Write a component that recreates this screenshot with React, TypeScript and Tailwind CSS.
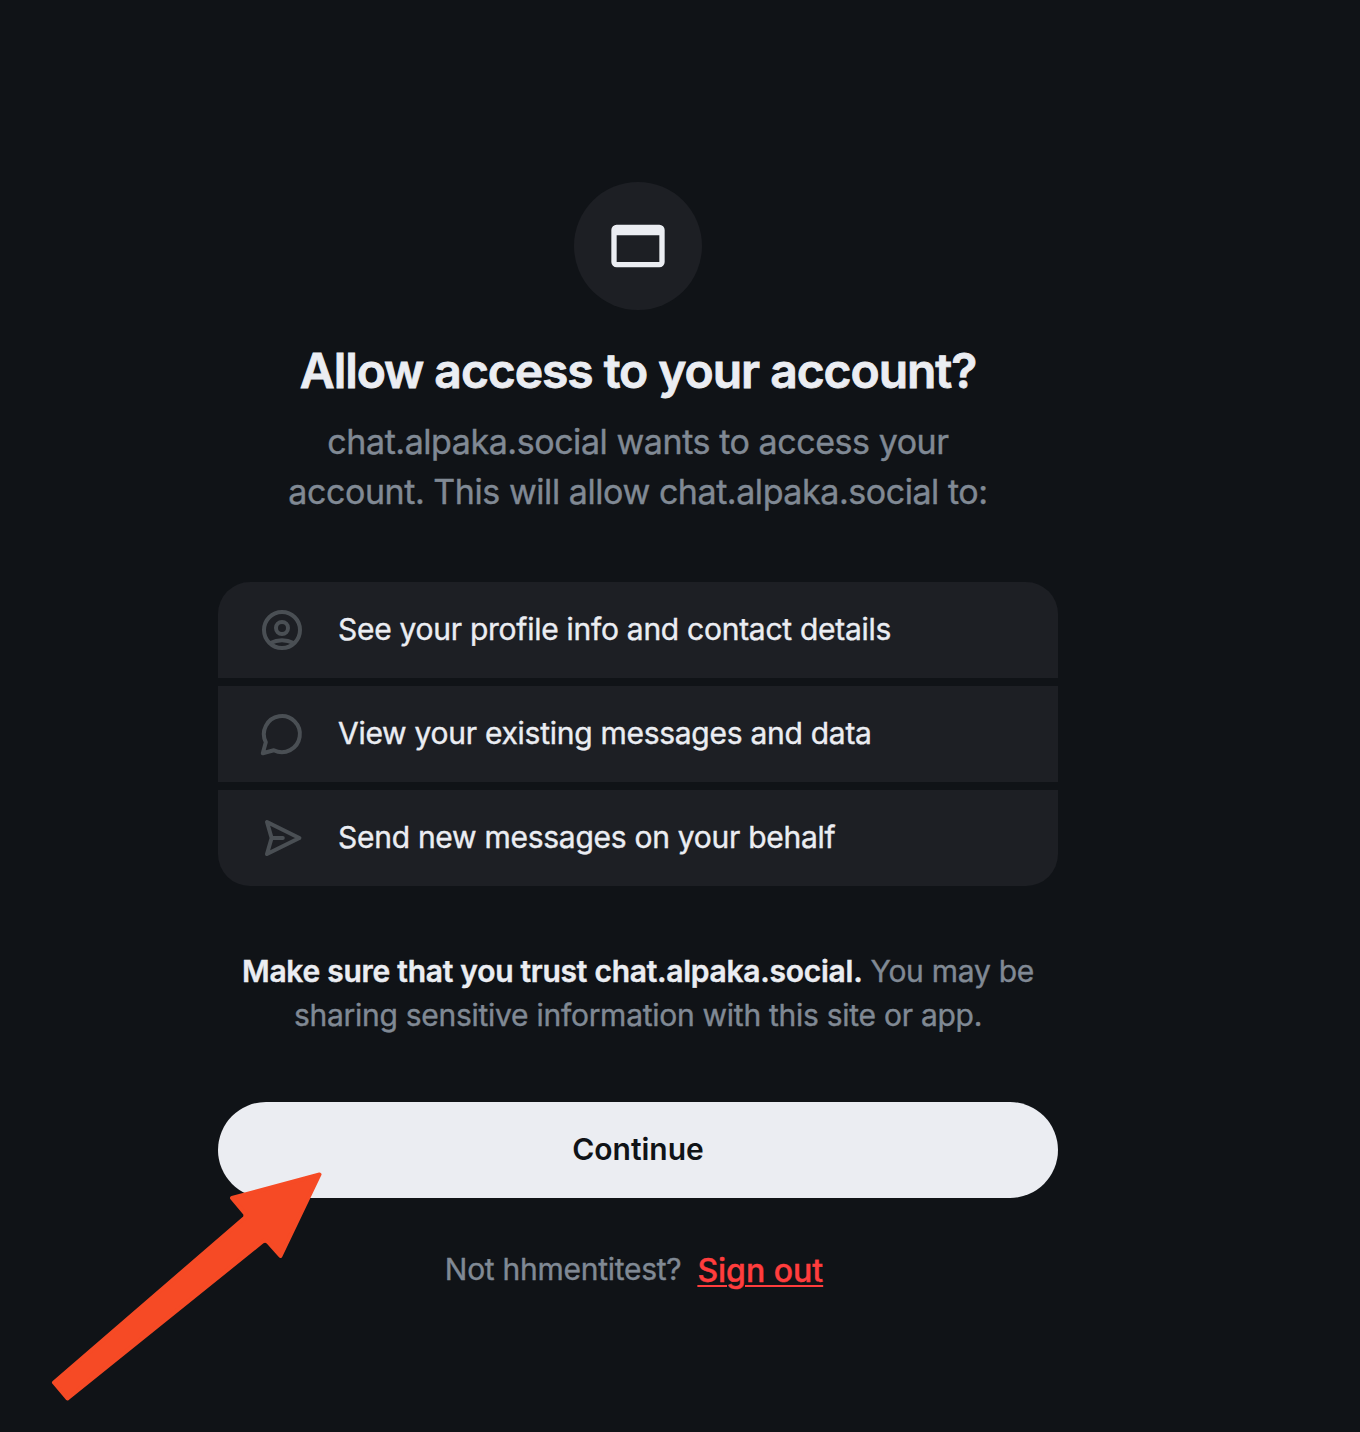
import type { ReactNode } from "react";

const iconProps = {
  width: 48,
  height: 48,
  viewBox: "0 0 24 24",
  fill: "none",
  stroke: "currentColor",
  strokeWidth: 2,
  strokeLinecap: "round" as const,
  strokeLinejoin: "round" as const,
};

function ProfileIcon() {
  return (
    <svg {...iconProps}>
      <circle cx="12" cy="12" r="9" />
      <circle cx="12" cy="11" r="3" />
      <path d="M6.2 18.5C8 17.6 9.9 17.1 12 17.1s4 .5 5.8 1.4" strokeLinecap="butt" />
    </svg>
  );
}

function ChatIcon() {
  return (
    <svg {...iconProps}>
      <path d="M2.4 21.6 3.9 16.1A9 9 0 1 1 7.9 20.1Z" />
    </svg>
  );
}

function SendIcon() {
  return (
    <svg {...iconProps}>
      <path d="M4.5 4 20.7 12 4.5 20 6.8 12ZM6.8 12H12.4" />
    </svg>
  );
}

function BrowserIcon() {
  return (
    <svg width="64" height="64" viewBox="0 0 24 24" fill="currentColor">
      <path
        fillRule="evenodd"
        d="M4 20q-.825 0-1.412-.587A1.93 1.93 0 0 1 2 18V6q0-.824.588-1.412A1.93 1.93 0 0 1 4 4h16q.824 0 1.413.588Q22 5.175 22 6v12q0 .824-.587 1.413A1.93 1.93 0 0 1 20 20zm0-2h16V8H4z"
      />
    </svg>
  );
}

function Permission({ icon, children }: { icon: ReactNode; children: ReactNode }) {
  return (
    <li className="flex h-24 items-center gap-8 bg-[#1d1f24] px-10 text-[30px] leading-[44px] tracking-[-0.27px] text-[#ebedf2]">
      <span className="shrink-0 text-[#4a4f54]">{icon}</span>
      <span className="pb-0.5 whitespace-nowrap">{children}</span>
    </li>
  );
}

function Arrow() {
  return (
    <svg
      className="pointer-events-none absolute top-[1168px] left-12"
      width="280"
      height="236"
      viewBox="48 1168 280 236"
    >
      <path
        d="M319.5 1174.5 232 1198 245 1213.500Q246 1216 244.500 1218L54 1382.500 67.500 1398.500 262.500 1241.500Q265.500 1239.500 268 1242L280.500 1256Z"
        fill="#f64a25"
        stroke="#f64a25"
        strokeWidth="4"
        strokeLinejoin="round"
      />
    </svg>
  );
}

export default function App() {
  return (
    <div className="relative h-[1432px] w-[1360px] overflow-hidden bg-[#101317] pl-[218px] font-['Inter',sans-serif] [-webkit-text-stroke:0.4px]">
      <main className="flex w-[840px] flex-col items-center pt-[182px] text-center">
        <div className="flex size-32 items-center justify-center rounded-full bg-[#1d1f24] text-[#ebedf2]">
          <BrowserIcon />
        </div>
        <h1 className="mt-8 text-[48px] leading-[58px] font-semibold tracking-[-1.056px] whitespace-nowrap text-[#ebedf2] [-webkit-text-stroke:0.8px]">
          Allow access to your account?
        </h1>
        <p className="mt-[17px] text-[34px] leading-[50px] tracking-[-0.442px] whitespace-nowrap text-[#808994]">
          chat.alpaka.social wants to access your
          <br />
          account. This will allow chat.alpaka.social to:
        </p>
        <ul className="mt-[65px] flex w-full flex-col gap-2 overflow-hidden rounded-[32px] text-left">
          <Permission icon={<ProfileIcon />}>See your profile info and contact details</Permission>
          <Permission icon={<ChatIcon />}>View your existing messages and data</Permission>
          <Permission icon={<SendIcon />}>Send new messages on your behalf</Permission>
        </ul>
        <p className="mt-[63px] text-[30px] leading-[44px] tracking-[-0.27px] whitespace-nowrap text-[#808994]">
          <strong className="font-semibold text-[#ebedf2]">Make sure that you trust chat.alpaka.social.</strong> You may be
          <br />
          sharing sensitive information with this site or app.
        </p>
        <button className="mt-[65px] h-24 w-full rounded-full bg-[#ebedf2] pb-0.5 text-[30px] leading-[44px] font-semibold tracking-normal text-[#101317] [-webkit-text-stroke:0px]">
          Continue
        </button>
        <div className="mt-[45px] flex items-center pr-2 whitespace-nowrap text-[#808994]">
          <span className="text-[30px] leading-[44px] tracking-[-0.27px]">Not hhmentitest?</span>
          <a href="#" className="ml-4 pt-1 text-[32px] leading-[48px] font-medium tracking-normal text-[#ff3d3d] underline decoration-2 underline-offset-[3px]">
            Sign out
          </a>
        </div>
      </main>
      <Arrow />
    </div>
  );
}
